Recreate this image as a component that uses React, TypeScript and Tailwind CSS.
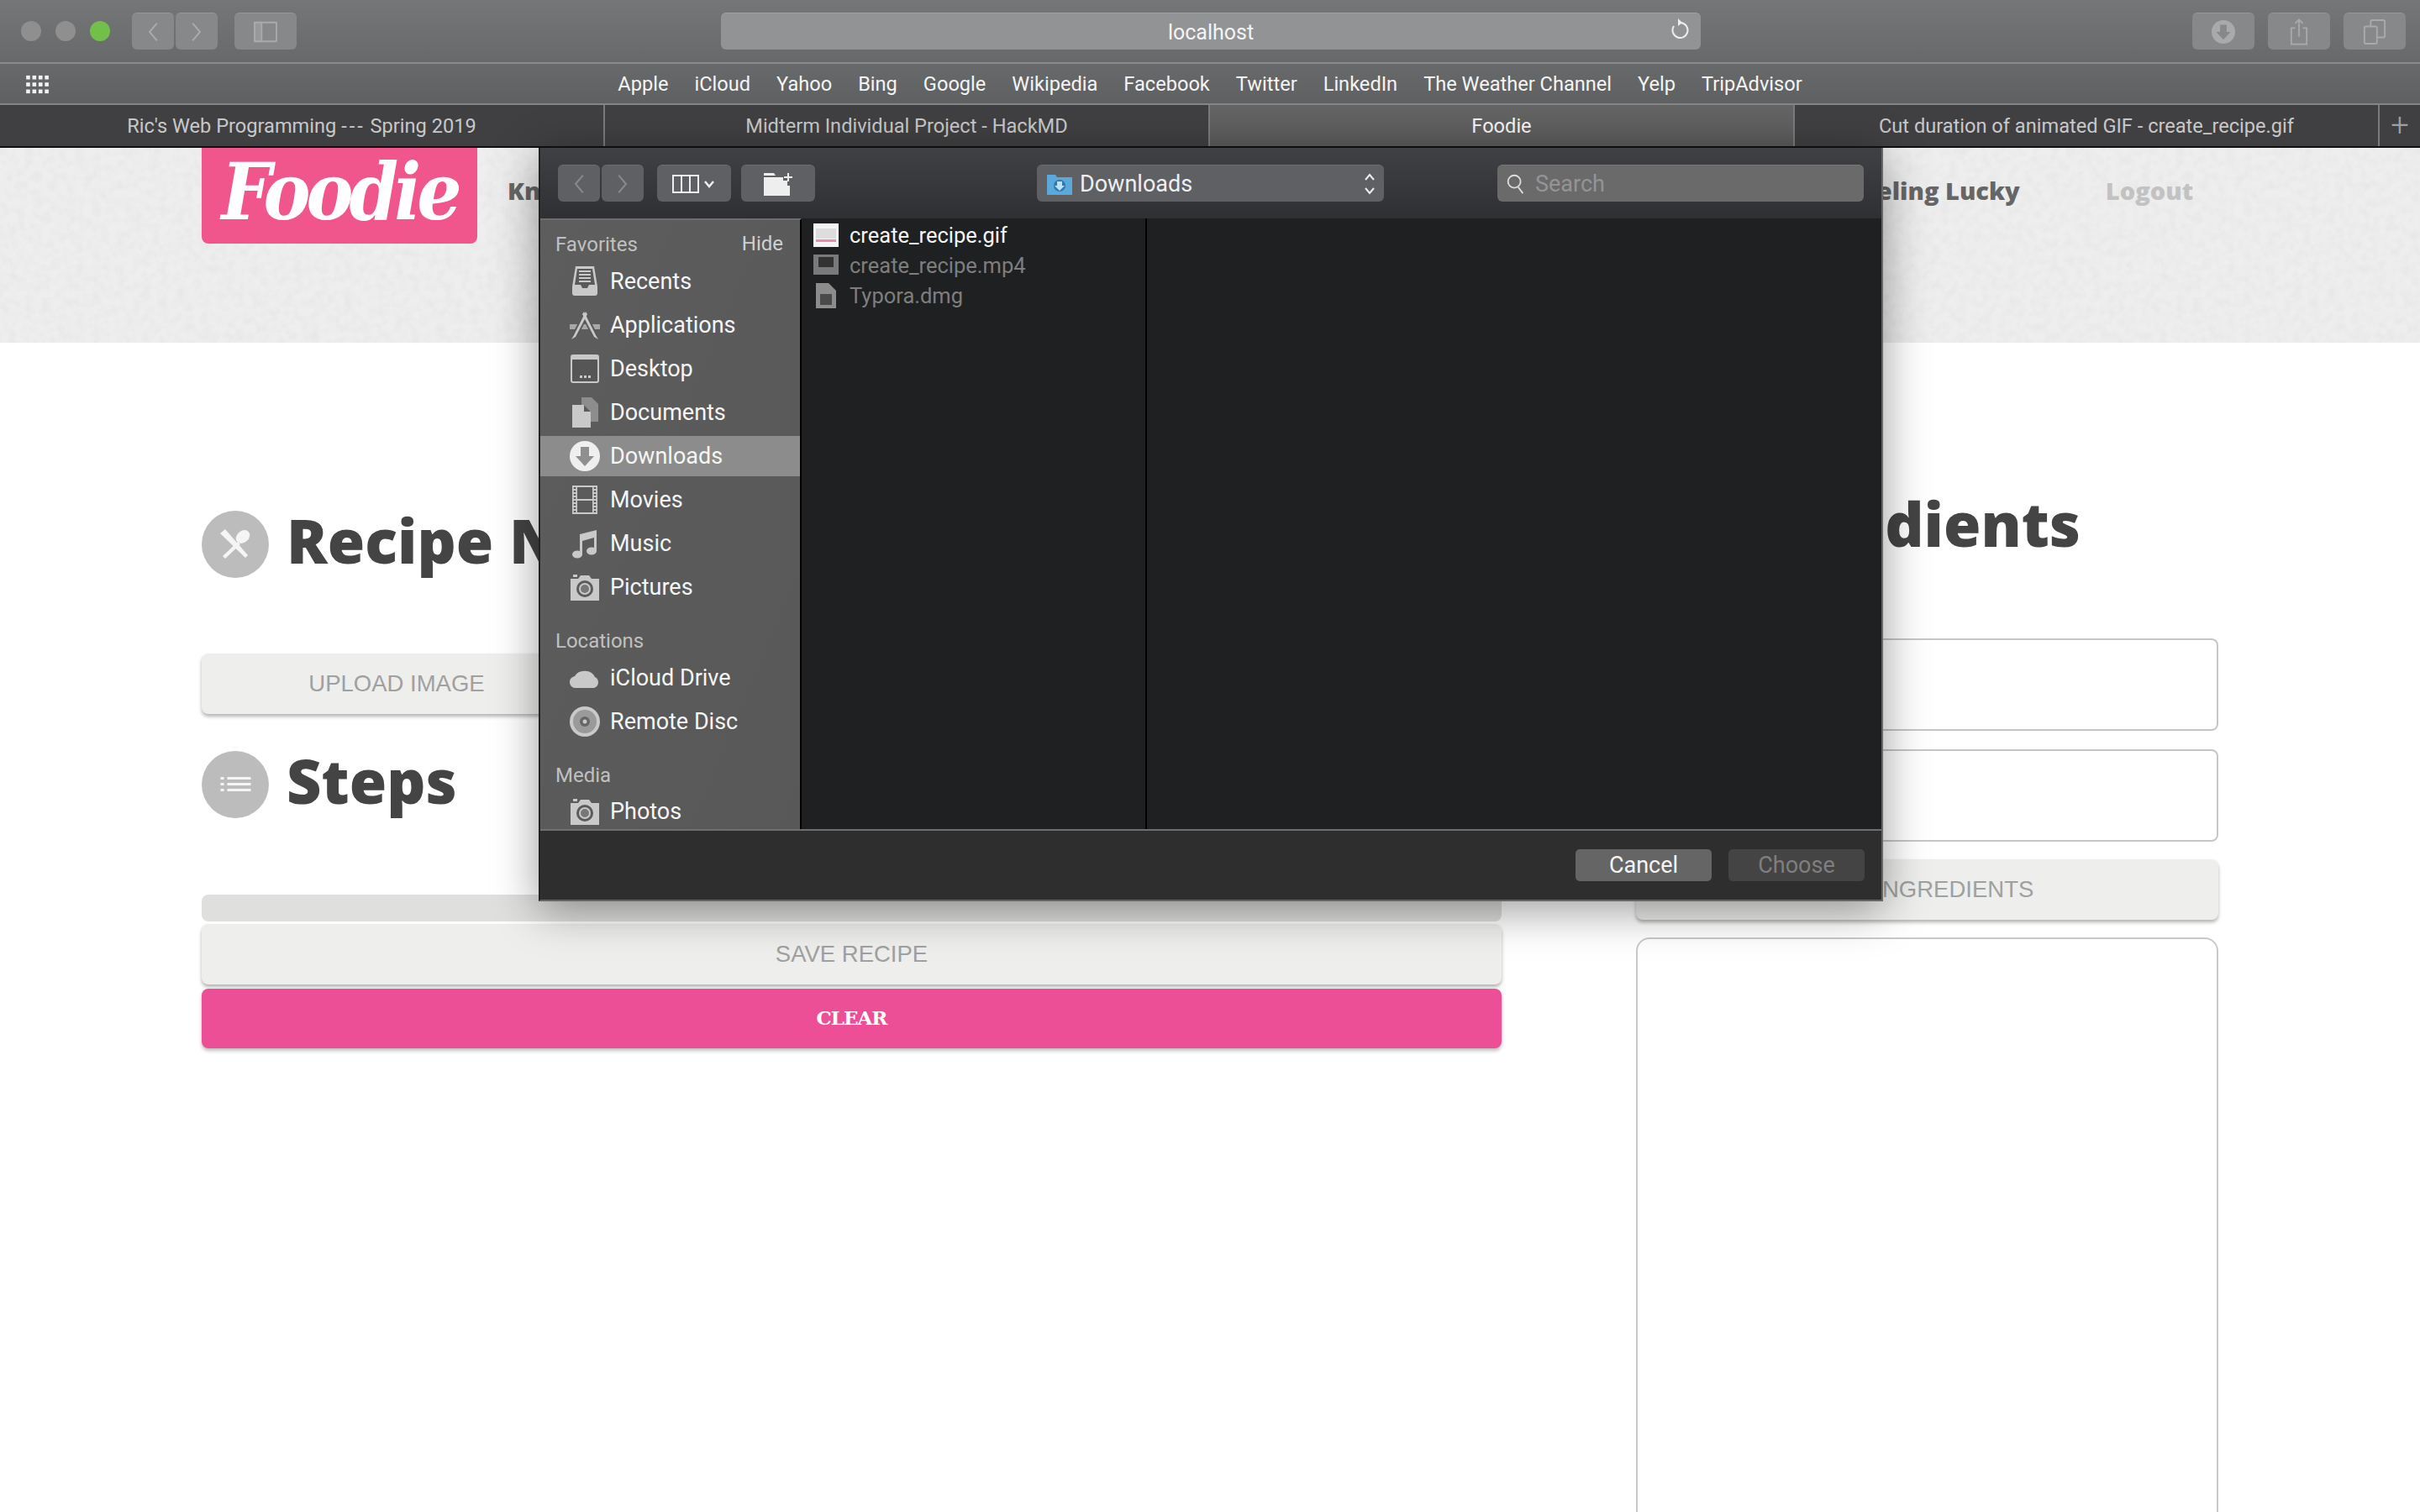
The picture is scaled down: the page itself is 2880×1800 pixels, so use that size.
import { FC, ReactNode } from "react";

const macFont = "font-['Roboto','Liberation_Sans',sans-serif]";
const pageFont = "font-['Open_Sans',sans-serif]";
const thinFont = "font-['Liberation_Sans',sans-serif]";

const Chevron: FC<{ dir: "left" | "right"; className?: string }> = ({ dir, className }) => (
  <svg viewBox="0 0 20 30" className={className ?? "w-[16px] h-[26px]"} fill="none" stroke="currentColor" strokeWidth="2.5">
    <path d={dir === "left" ? "M16 2 5 15l11 13" : "M4 2l11 13L4 28"} />
  </svg>
);

const ToolBtn: FC<{ w: string; children?: ReactNode; dark?: boolean }> = ({ w, children, dark }) => (
  <div className={`${w} h-[44px] rounded-[6px] flex items-center justify-center shrink-0 border-t ${dark ? "bg-[#5f6063] border-[#6d6e70] text-[#a5a5a5]" : "bg-[#87888a] border-[#97989a] text-[#a9aaab]"}`}>
    {children}
  </div>
);

const SidebarGlyph = () => (
  <svg viewBox="0 0 30 30" className="w-[28px] h-[28px]" fill="none" stroke="#a9aaab" strokeWidth="2">
    <rect x="1" y="3" width="28" height="24" rx="1" />
    <rect x="1" y="3" width="9" height="24" fill="#a9aaab" fillOpacity=".5" />
  </svg>
);

const GridDots = () => (
  <svg viewBox="0 0 30 26" className="w-[30px] h-[24px]" fill="#f2f2f2">
    {[1, 10, 19].map((y) =>
      [0, 8, 16, 24].map((x) => <rect key={`${x}-${y}`} x={x} y={y} width="5" height="5" />)
    )}
  </svg>
);

const DownloadCircle: FC<{ size: string; ring: string; arrow: string }> = ({ size, ring, arrow }) => (
  <svg viewBox="0 0 36 36" className={size}>
    <circle cx="18" cy="18" r="18" fill={ring} />
    <path d="M13 7h10v11h6L18 30 7 18h6z" fill={arrow} />
  </svg>
);

const Glyph: FC<{ name: string }> = ({ name }) => {
  const c = "#c9c9c9";
  const box = "w-[36px] h-[36px] shrink-0";
  switch (name) {
    case "Recents":
      return (
        <svg viewBox="0 0 36 36" className={box}>
          <path d="M7 0h22l4 24v8a3 3 0 0 1-3 3H6a3 3 0 0 1-3-3v-8z" fill={c} />
          <path d="M9 3h18l3 19h-7l-2 4h-6l-2-4H6z" fill="#5a5a5a" />
          <path d="M11 6h14M11 10h14M11 14h14M11 18h14" stroke={c} strokeWidth="2" />
        </svg>
      );
    case "Applications":
      return (
        <svg viewBox="0 0 36 36" className={box}>
          <rect x="0" y="17" width="36" height="6" fill="#a8a8a8" />
          <path d="M20 3 6 31" stroke="#5a5a5a" strokeWidth="7" />
          <path d="M16 3l14 28" stroke="#5a5a5a" strokeWidth="7" />
          <path d="M19 2 5 30l-3 5 5-3L21 5z" fill={c} />
          <path d="M17 2l14 28 3 5-5-3L15 5z" fill={c} />
        </svg>
      );
    case "Desktop":
      return (
        <svg viewBox="0 0 36 36" className={box}>
          <rect x="1" y="1" width="34" height="34" rx="3" fill={c} />
          <rect x="3" y="7" width="30" height="26" rx="1" fill="#565656" />
          <path d="M12 26h3v3h-3zM17 26h3v3h-3zM22 26h3v3h-3z" fill={c} />
        </svg>
      );
    case "Documents":
      return (
        <svg viewBox="0 0 36 36" className={box}>
          <path d="M14 0h12l8 8v21H14z" fill="#8d8d8d" />
          <path d="M3 9h14l8 8v19H3z" fill={c} />
          <path d="M17 9l8 8h-8z" fill="#5b5b5b" />
        </svg>
      );
    case "Downloads":
      return <DownloadCircle size={box} ring="#efefef" arrow="#8f8f8f" />;
    case "Movies":
      return (
        <svg viewBox="0 0 36 36" className={box}>
          <rect x="3" y="1" width="30" height="34" fill={c} />
          <rect x="9" y="3" width="18" height="14" fill="#5b5b5b" />
          <rect x="9" y="19" width="18" height="14" fill="#5b5b5b" />
          <path d="M6 3v30" stroke="#5b5b5b" strokeWidth="2.5" strokeDasharray="2 2" />
          <path d="M30 3v30" stroke="#5b5b5b" strokeWidth="2.5" strokeDasharray="2 2" />
        </svg>
      );
    case "Music":
      return (
        <svg viewBox="0 0 36 36" className={box} fill={c}>
          <path d="M12 7 32 2v25h-3V11l-14 4v17h-3z" />
          <ellipse cx="9" cy="31" rx="6" ry="4.5" />
          <ellipse cx="26" cy="27" rx="6" ry="4.5" />
        </svg>
      );
    case "iCloud":
      return (
        <svg viewBox="0 0 36 36" className={box} fill={c}>
          <path d="M8 30a7 7 0 0 1-2-14 13 11 0 0 1 24 1 7 7 0 0 1-1 13z" />
        </svg>
      );
    case "Remote":
      return (
        <svg viewBox="0 0 36 36" className={box}>
          <circle cx="18" cy="18" r="18" fill={c} />
          <circle cx="18" cy="18" r="14" fill="#9a9a9a" />
          <circle cx="18" cy="18" r="6" fill="#666" />
          <circle cx="18" cy="18" r="2.5" fill={c} />
        </svg>
      );
    default:
      return (
        <svg viewBox="0 0 36 36" className={box}>
          <path d="M1 8h9l3-4h10l3 4h9v26H1z" fill={c} />
          <rect x="4" y="3" width="5" height="3" fill={c} />
          <circle cx="18" cy="20" r="10" fill="#5b5b5b" />
          <circle cx="18" cy="20" r="7" fill={c} />
          <circle cx="18" cy="20" r="5" fill="#777" />
        </svg>
      );
  }
};

const bookmarks = ["Apple", "iCloud", "Yahoo", "Bing", "Google", "Wikipedia", "Facebook", "Twitter", "LinkedIn", "The Weather Channel", "Yelp", "TripAdvisor"];

const tabs: { key: string; label: ReactNode; w: string; active?: boolean }[] = [
  {
    key: "ric",
    label: (
      <span className="whitespace-pre">
        Ric's Web Programming <span className="tracking-[3px]">---</span> Spring 2019
      </span>
    ),
    w: "w-[720px]",
  },
  { key: "hackmd", label: "Midterm Individual Project - HackMD", w: "w-[720px]" },
  { key: "foodie", label: "Foodie", w: "w-[696px]", active: true },
  { key: "gif", label: "Cut duration of animated GIF - create_recipe.gif", w: "w-[696px]" },
];

const BrowserChrome = () => (
  <div className={`${macFont} text-white`}>
    <div className="h-[76px] bg-gradient-to-b from-[#757677] to-[#68696a] border-b-2 border-[#8a8b8c] flex items-center pl-[25px] pr-[17px]">
      <div className="flex gap-[17px]">
        <div className="w-[24px] h-[24px] rounded-full bg-[#8f8f90]" />
        <div className="w-[24px] h-[24px] rounded-full bg-[#8f8f90]" />
        <div className="w-[24px] h-[24px] rounded-full bg-[#72c04a]" />
      </div>
      <div className="flex gap-[2px] ml-[26px]">
        <ToolBtn w="w-[50px]"><Chevron dir="left" /></ToolBtn>
        <ToolBtn w="w-[50px]"><Chevron dir="right" /></ToolBtn>
      </div>
      <div className="ml-[20px]"><ToolBtn w="w-[74px]"><SidebarGlyph /></ToolBtn></div>
      <div className="ml-[505px] w-[1166px] h-[44px] pt-[2px] rounded-[6px] bg-[#929394] border-t border-[#a2a3a4] relative flex items-center justify-center text-[25px] text-[#f4f4f4]">
        localhost
        <svg viewBox="0 0 24 30" className="absolute right-[14px] top-[5px] w-[24px] h-[30px]" fill="none" stroke="#eee" strokeWidth="2">
          <path d="M14 6a9 9 0 1 1-8 4" />
          <path d="M11 1l5 5-5 4" fill="#eee" stroke="none" />
        </svg>
      </div>
      <div className="ml-auto flex gap-[16px]">
        <ToolBtn w="w-[74px]"><DownloadCircle size="w-[28px] h-[28px]" ring="#a9aaab" arrow="#87888a" /></ToolBtn>
        <ToolBtn w="w-[74px]">
          <svg viewBox="0 0 24 36" className="w-[22px] h-[34px]" fill="none" stroke="#a9aaab" strokeWidth="2">
            <path d="M7 13H2v21h20V13h-5M12 24V2M7 7l5-5 5 5" />
          </svg>
        </ToolBtn>
        <ToolBtn w="w-[74px]">
          <svg viewBox="0 0 30 32" className="w-[28px] h-[30px]" fill="none" stroke="#a9aaab" strokeWidth="2">
            <rect x="2" y="9" width="16" height="22" rx="2" />
            <path d="M10 9V3a2 2 0 0 1 2-2h14a2 2 0 0 1 2 2v18a2 2 0 0 1-2 2h-8" />
          </svg>
        </ToolBtn>
      </div>
    </div>
    <div className="h-[49px] pt-[2px] bg-gradient-to-b from-[#68696a] to-[#5f6061] border-b-2 border-[#848586] relative flex items-center justify-center gap-[31px] text-[23.6px] text-[#f4f4f4]">
      <div className="absolute left-[30px] top-[13px]"><GridDots /></div>
      {bookmarks.map((b) => (
        <span key={b}>{b}</span>
      ))}
    </div>
    <div className="h-[51px] bg-[#404042] border-b-2 border-[#111] flex text-[23.6px]">
      {tabs.map((t) => (
        <div
          key={t.key}
          className={`${t.w} pt-[2px] border-r-2 border-[#7b7b7c] flex items-center justify-center ${t.active ? "bg-gradient-to-b from-[#656566] to-[#5b5b5c] text-[#f6f6f6]" : "text-[#c8c8c8]"}`}
        >
          {t.label}
        </div>
      ))}
      <div className="flex-1 flex items-center justify-center text-[#a0a0a0] text-[38px] font-light">+</div>
    </div>
  </div>
);

const Utensils = () => (
  <svg viewBox="0 0 40 40" className="w-[40px] h-[40px]" fill="#f5f5f5">
    <path d="M2 7l6-5 27 31-3 3z" />
    <path d="M5 34 23 17l3 3L8 37z" />
    <ellipse cx="29" cy="11" rx="9" ry="7" transform="rotate(-40 29 11)" />
  </svg>
);

const ListIcon = () => (
  <svg viewBox="0 0 36 20" className="w-[37px] h-[20px]" fill="#f5f5f5">
    <path d="M0 1h4v3H0zM0 8h4v3H0zM0 15h4v3H0zM8 1h28v3H8zM8 8h28v3H8zM8 15h28v3H8z" />
  </svg>
);

const Heading: FC<{ icon: ReactNode; title: string }> = ({ icon, title }) => (
  <div className="flex items-center h-[80px]">
    <div className="w-[80px] h-[80px] rounded-full bg-[#bcbcbc] flex items-center justify-center shrink-0">{icon}</div>
    <h2 className={`${pageFont} ml-[21px] mb-[10px] text-[72px] font-extrabold text-[#444] leading-none whitespace-nowrap`}>{title}</h2>
  </div>
);

const GreyButton: FC<{ label: string; className?: string }> = ({ label, className }) => (
  <div className={`${thinFont} ${className ?? ""} h-[72px] rounded-[8px] bg-[#eeeeec] shadow-[0_3px_4px_rgba(0,0,0,0.3)] flex items-center justify-center text-[27.5px] text-[#a0a0a0]`}>
    {label}
  </div>
);

const Page = () => (
  <div>
    <header className={`${pageFont} relative h-[232px] bg-[#eeeeee] flex items-start pl-[240px] pr-[270px] font-extrabold text-[29px] text-[#666]`}>
      <svg className="absolute inset-0 w-full h-full" aria-hidden="true">
        <filter id="paper">
          <feTurbulence type="fractalNoise" baseFrequency="0.1" numOctaves="3" seed="4" />
          <feColorMatrix values="0 0 0 0 0.5  0 0 0 0 0.5  0 0 0 0 0.5  0.25 0 0 0 -0.09" />
        </filter>
        <rect width="100%" height="100%" filter="url(#paper)" />
      </svg>
      <div className="relative w-[328px] h-[114px] bg-[#f0558b] rounded-b-[8px] flex items-center justify-center overflow-hidden">
        <span className="font-['DejaVu_Serif',serif] font-bold italic text-[84px] leading-[1.1] text-white tracking-[-5px] scale-y-[1.12] -mt-[8px]">Foodie</span>
      </div>
      <span className="relative ml-[36px] mt-[29px]">Knowledge</span>
      <span className="relative ml-auto mt-[29px]">Feeling Lucky</span>
      <span className="relative ml-[102px] mt-[29px] text-[#c2c2c2]">Logout</span>
    </header>
    <main className="flex pl-[240px]">
      <section className="w-[1547px]">
        <div className="mt-[200px]"><Heading icon={<Utensils />} title="Recipe Name" /></div>
        <GreyButton label="UPLOAD IMAGE" className="w-[464px] mt-[90px]" />
        <div className="mt-[44px]"><Heading icon={<ListIcon />} title="Steps" /></div>
        <div className="mt-[91px] h-[32px] rounded-[8px] bg-[#dfdfdd]" />
        <GreyButton label="SAVE RECIPE" className="mt-[3px]" />
        <div className="mt-[5px] h-[71px] rounded-[8px] bg-[#ec4f96] shadow-[0_3px_4px_rgba(0,0,0,0.25)] flex items-center justify-center font-['DejaVu_Serif',serif] font-bold text-[23px] tracking-[-1px] text-white">
          CLEAR
        </div>
      </section>
      <section className="w-[693px] ml-[160px]">
        <div className="mt-[180px]"><Heading icon={<Utensils />} title="Ingredients" /></div>
        <div className="mt-[92px] h-[110px] rounded-[8px] border-2 border-[#c6c6c6]" />
        <div className="mt-[22px] h-[110px] rounded-[8px] border-2 border-[#c6c6c6]" />
        <GreyButton label="ADD INGREDIENTS" className="mt-[21px]" />
        <div className="mt-[21px] h-[800px] rounded-[16px] border-2 border-[#c9c9c9]" />
      </section>
    </main>
  </div>
);

const favorites = ["Recents", "Applications", "Desktop", "Documents", "Downloads", "Movies", "Music", "Pictures"];

const SideItem: FC<{ label: string; glyph?: string; active?: boolean }> = ({ label, glyph, active }) => (
  <div className="h-[52px] py-[2px]">
    <div className={`h-full pl-[35px] flex items-center gap-[12px] text-[27px] text-[#f5f5f5] ${active ? "bg-[#8c8c8c]" : ""}`}>
      <Glyph name={glyph ?? label} />
      {label}
    </div>
  </div>
);

const SideHeader: FC<{ label: string; className?: string }> = ({ label, className }) => (
  <div className={`${className ?? ""} pl-[18px] text-[24px] text-[#c0c0c0] leading-none`}>{label}</div>
);

const FileRow: FC<{ name: string; dim?: boolean; icon: ReactNode }> = ({ name, dim, icon }) => (
  <div className={`h-[36px] flex items-center text-[25.5px] ${dim ? "text-[#7e7e7e]" : "text-[#f4f4f4]"}`}>
    <div className="w-[30px] h-[30px] ml-[14px] mr-[13px] flex items-center justify-center shrink-0">{icon}</div>
    {name}
  </div>
);

const OpenDialog = () => (
  <div className={`${macFont} absolute left-[641px] top-[176px] w-[1600px] h-[897px] flex flex-col border-x-2 border-b-2 border-l-[#222] border-r-[#666] border-b-[#666] shadow-[0_10px_50px_rgba(0,0,0,0.4)]`}>
    <div className="h-[84px] bg-gradient-to-b from-[#404144] to-[#2f3033] flex items-start pt-[20px] pl-[21px] shrink-0">
      <div className="flex gap-[2px]">
        <ToolBtn dark w="w-[50px]"><Chevron dir="left" className="w-[16px] h-[26px] text-[#8a8a8c]" /></ToolBtn>
        <ToolBtn dark w="w-[50px]"><Chevron dir="right" className="w-[16px] h-[26px] text-[#8a8a8c]" /></ToolBtn>
      </div>
      <div className="ml-[16px]">
        <ToolBtn dark w="w-[88px]">
          <svg viewBox="0 0 52 24" className="w-[54px] h-[24px]" fill="none" stroke="#eee" strokeWidth="2">
            <rect x="1" y="2" width="30" height="20" />
            <path d="M11 2v20M21 2v20" />
            <path d="M39 9l5 6 5-6" strokeWidth="2.5" />
          </svg>
        </ToolBtn>
      </div>
      <div className="ml-[12px]">
        <ToolBtn dark w="w-[88px]">
          <svg viewBox="0 0 36 28" className="w-[36px] h-[28px]" fill="#eee">
            <path d="M1 1h12l2 3H1zM1 6h23v4h5v6h3v12H1z" />
            <path d="M30 1v10M25 6h10" stroke="#eee" strokeWidth="2" fill="none" />
          </svg>
        </ToolBtn>
      </div>
      <div className="ml-[264px] w-[413px] h-[44px] pt-[1px] rounded-[6px] bg-[#5f6063] border-t border-[#6d6e70] flex items-center pl-[12px] text-[27px] text-[#efefef] relative">
        <svg viewBox="0 0 30 26" className="w-[30px] h-[26px] mr-[9px]">
          <path d="M0 2h10l2 3h18v21H0z" fill="#5ba8da" />
          <circle cx="15" cy="15" r="7" fill="#2f78ad" />
          <path d="M12 10h6v5h3l-6 6-6-6h3z" fill="#bfe0f4" />
        </svg>
        Downloads
        <svg viewBox="0 0 14 30" className="absolute right-[10px] top-[7px] w-[14px] h-[30px]" fill="none" stroke="#eee" strokeWidth="2">
          <path d="M2 10l5-6 5 6M2 20l5 6 5-6" />
        </svg>
      </div>
      <div className="ml-[135px] w-[436px] h-[44px] pt-[1px] rounded-[6px] bg-[#6a6a6b] border-t border-[#78787a] flex items-center pl-[10px] text-[27px] text-[#949494]">
        <svg viewBox="0 0 24 28" className="w-[24px] h-[26px] mr-[11px]" fill="none" stroke="#ddd" strokeWidth="2">
          <circle cx="10" cy="11" r="8" />
          <path d="M15 18l6 8" />
        </svg>
        Search
      </div>
    </div>
    <div className="flex-1 flex min-h-0 bg-[#1f2022]">
      <aside className="w-[311px] bg-gradient-to-br from-[#5d5d5d] to-[#585858] border-r-2 border-[#000] overflow-hidden shrink-0 border-t-2 border-t-[#6d6d6d]">
        <div className="flex justify-between pr-[20px] items-center mt-[17px] mb-[6px]">
          <SideHeader label="Favorites" />
          <span className="text-[24px] leading-none text-[#d0d0d0] -mt-[3px]">Hide</span>
        </div>
        {favorites.map((f) => (
          <SideItem key={f} label={f} active={f === "Downloads"} />
        ))}
        <SideHeader label="Locations" className="mt-[26px] mb-[6px]" />
        <SideItem label="iCloud Drive" glyph="iCloud" />
        <SideItem label="Remote Disc" glyph="Remote" />
        <SideHeader label="Media" className="mt-[26px] mb-[5px]" />
        <SideItem label="Photos" glyph="Pictures" />
      </aside>
      <div className="w-[411px] border-r-2 border-[#000] pt-[2px] shrink-0">
        <FileRow
          name="create_recipe.gif"
          icon={
            <svg viewBox="0 0 30 28" className="w-[30px] h-[28px]">
              <rect width="30" height="28" fill="#f4f4f4" />
              <rect x="3" y="6" width="24" height="12" fill="#ddd" />
              <rect x="3" y="19" width="24" height="3" fill="#ee8ab0" />
            </svg>
          }
        />
        <FileRow
          dim
          name="create_recipe.mp4"
          icon={
            <svg viewBox="0 0 30 30" className="w-[30px] h-[30px]">
              <rect y="2" width="30" height="24" fill="#7a7a7a" />
              <rect x="6" y="5" width="18" height="12" fill="#333" />
            </svg>
          }
        />
        <FileRow
          dim
          name="Typora.dmg"
          icon={
            <svg viewBox="0 0 24 30" className="w-[24px] h-[30px]">
              <path d="M0 0h15l9 9v21H0z" fill="#8c8c8c" />
              <rect x="5" y="13" width="14" height="13" fill="#4a4a4a" />
            </svg>
          }
        />
      </div>
    </div>
    <div className="h-[84px] border-t-2 border-[#6f6f6f] bg-[#2e2e2e] flex items-start justify-end gap-[20px] pt-[22px] pr-[20px] shrink-0 text-[27px]">
      <div className="w-[162px] h-[38px] pt-[1px] rounded-[5px] bg-[#656565] text-[#f4f4f4] flex items-center justify-center">Cancel</div>
      <div className="w-[162px] h-[38px] pt-[1px] rounded-[5px] bg-[#444] text-[#7f7f7f] flex items-center justify-center">Choose</div>
    </div>
  </div>
);

export default function App() {
  return (
    <div className="relative w-[2880px] h-[1800px] overflow-hidden bg-white">
      <BrowserChrome />
      <Page />
      <OpenDialog />
    </div>
  );
}
